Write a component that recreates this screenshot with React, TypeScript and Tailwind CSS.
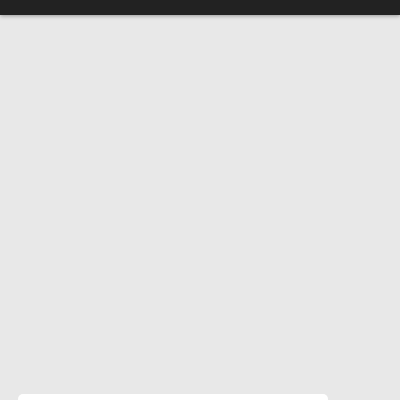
export default function App() {
	return (
		<div className="min-h-screen bg-[#e8e8e8] font-['Liberation_Sans',sans-serif]">
			<header className="h-[15px] bg-[#222222] shadow-[0_1px_4px_rgba(0,0,0,0.35)]" />
			<main className="pl-[18px] pt-[379px]">
				<section className="h-[120px] w-[310px] rounded-[5px] bg-white" />
			</main>
		</div>
	);
}
